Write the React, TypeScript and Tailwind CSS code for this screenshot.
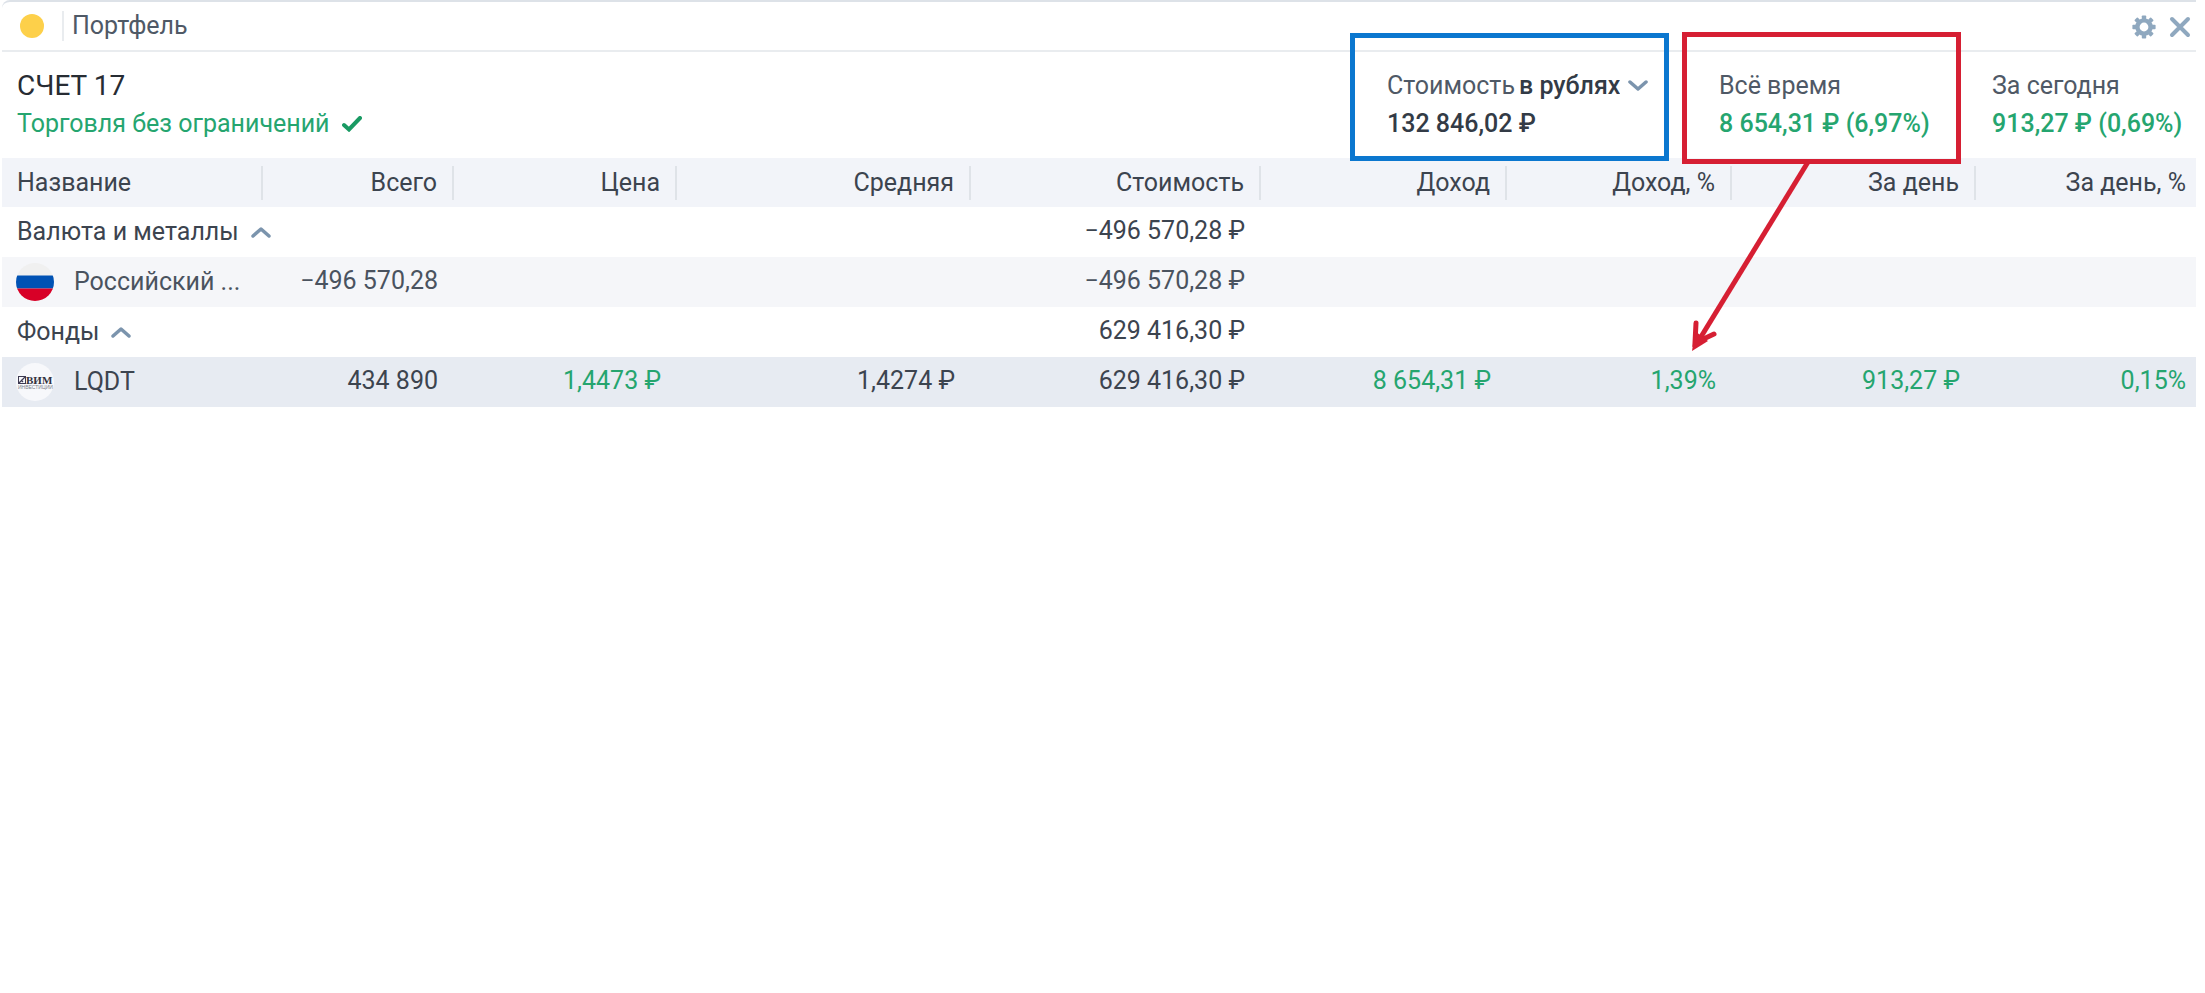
import React, { useState } from "react";

type Row = {
  name: string;
  logo: React.ReactNode;
  total: string;
  price?: string;
  average?: string;
  value: string;
  profit?: string;
  profitPercent?: string;
  day?: string;
  dayPercent?: string;
  rowClass: string;
};

type Group = {
  title: string;
  value: string;
  rows: Row[];
};

const columns = [
  { title: "Название", width: "w-[261px]" },
  { title: "Всего", width: "w-[191px]" },
  { title: "Цена", width: "w-[223px]" },
  { title: "Средняя", width: "w-[294px]" },
  { title: "Стоимость", width: "w-[290px]" },
  { title: "Доход", width: "w-[246px]" },
  { title: "Доход, %", width: "w-[225px]" },
  { title: "За день", width: "w-[244px]" },
  { title: "За день, %", width: "w-[220px]" },
];

function FlagIcon() {
  return (
    <svg viewBox="0 0 38 38" className="size-[38px] shrink-0" aria-hidden="true">
      <clipPath id="flag-circle">
        <circle cx="19" cy="19" r="19" />
      </clipPath>
      <g clipPath="url(#flag-circle)">
        <rect width="38" height="38" fill="#f0f0f0" />
        <rect y="12.5" width="38" height="13" fill="#0052b4" />
        <rect y="25.5" width="38" height="13" fill="#d80027" />
      </g>
    </svg>
  );
}

function FundIcon() {
  return (
    <svg viewBox="0 0 38 38" className="size-[38px] shrink-0" aria-hidden="true">
      <circle cx="19" cy="19" r="19" fill="#f7f8fb" />
      <rect x="2.5" y="13.5" width="7" height="7" fill="none" stroke="#3d3a52" strokeWidth="1" />
      <path d="M2.5 20.5l7-7M5 17l2 2" stroke="#3d3a52" strokeWidth="1.2" fill="none" />
      <text x="10" y="21" fontSize="11" fontWeight="700" fill="#33333d" fontFamily="Liberation Serif, serif">
        ВИМ
      </text>
      <text x="2" y="26" fontSize="5" fill="#7d808a" fontFamily="Liberation Sans, sans-serif">
        ИНВЕСТИЦИИ
      </text>
    </svg>
  );
}

function Chevron({ up }: { up?: boolean }) {
  return (
    <svg viewBox="0 0 20 12" className="h-3 w-5 shrink-0" fill="none" aria-hidden="true">
      <path
        d={up ? "M2 10l8-7 8 7" : "M2 2l8 7 8-7"}
        stroke="#7b94ad"
        strokeWidth="3.5"
        strokeLinecap="round"
        strokeLinejoin="round"
      />
    </svg>
  );
}

function GearIcon() {
  const teeth = [0, 45, 90, 135, 180, 225, 270, 315];
  return (
    <svg viewBox="0 0 24 24" className="size-6" aria-hidden="true">
      <circle cx="12" cy="12" r="6.6" fill="none" stroke="#8fa8bf" strokeWidth="4.4" />
      {teeth.map((angle) => (
        <rect key={angle} x="9.8" y="0.4" width="4.4" height="4" rx="0.8" fill="#8fa8bf" transform={`rotate(${angle} 12 12)`} />
      ))}
    </svg>
  );
}

const groups: Group[] = [
  {
    title: "Валюта и металлы",
    value: "−496 570,28 ₽",
    rows: [
      {
        name: "Российский ...",
        logo: <FlagIcon />,
        total: "−496 570,28",
        value: "−496 570,28 ₽",
        rowClass: "bg-[#f5f6f9] text-[#4a535f]",
      },
    ],
  },
  {
    title: "Фонды",
    value: "629 416,30 ₽",
    rows: [
      {
        name: "LQDT",
        logo: <FundIcon />,
        total: "434 890",
        price: "1,4473 ₽",
        average: "1,4274 ₽",
        value: "629 416,30 ₽",
        profit: "8 654,31 ₽",
        profitPercent: "1,39%",
        day: "913,27 ₽",
        dayPercent: "0,15%",
        rowClass: "bg-[#e7ebf2]",
      },
    ],
  },
];

function GroupRows({ group }: { group: Group }) {
  const [open, setOpen] = useState(true);

  return (
    <tbody>
      <tr className="h-[50px] font-[450]">
        <td colSpan={4} className="pl-[15px]">
          <button type="button" aria-expanded={open} onClick={() => setOpen(!open)} className="flex items-center gap-3">
            {group.title}
            <Chevron up={open} />
          </button>
        </td>
        <td className="pr-4 pb-0.5 text-right">{group.value}</td>
        <td colSpan={4} />
      </tr>
      {open &&
        group.rows.map((row) => (
          <tr key={row.name} className={`h-[50px] ${row.rowClass}`}>
            <td className="pl-[14px]">
              <div className="flex items-center gap-5">
                {row.logo}
                <span>{row.name}</span>
              </div>
            </td>
            <td className="pr-4 pb-0.5 text-right">{row.total}</td>
            <td className="pr-4 pb-0.5 text-right text-[#25a56f]">{row.price}</td>
            <td className="pr-4 pb-0.5 text-right">{row.average}</td>
            <td className="pr-4 pb-0.5 text-right">{row.value}</td>
            <td className="pr-4 pb-0.5 text-right text-[#25a56f]">{row.profit}</td>
            <td className="pr-4 pb-0.5 text-right text-[#25a56f]">{row.profitPercent}</td>
            <td className="pr-4 pb-0.5 text-right text-[#25a56f]">{row.day}</td>
            <td className="pr-[10px] pb-0.5 text-right text-[#25a56f]">{row.dayPercent}</td>
          </tr>
        ))}
    </tbody>
  );
}

export default function App() {
  return (
    <div className="min-h-screen bg-white pr-[9px] pl-[2px] font-[Roboto,sans-serif] text-[25px] leading-[38px] text-[#3c444f]">
      {/* Title bar */}
      <header className="flex h-[52px] items-center rounded-tl-lg border-t-2 border-b-2 border-t-[#dde2e8] border-b-[#e9ecef] pr-1 pl-[18px] text-[#4f5966]">
        <span className="size-6 rounded-full bg-[#fdd04a]" />
        <h1 className="ml-[18px] border-l-2 border-[#e9ecef] pl-2 leading-[30px]">Портфель</h1>
        <div className="ml-auto flex items-center gap-3 pt-0.5">
          <button type="button" aria-label="Настройки">
            <GearIcon />
          </button>
          <button type="button" aria-label="Закрыть">
            <svg viewBox="0 0 24 24" className="size-6" aria-hidden="true">
              <path d="M4 4l16 16M20 4L4 20" stroke="#8fa8bf" strokeWidth="4" strokeLinecap="round" />
            </svg>
          </button>
        </div>
      </header>

      {/* Account summary */}
      <section className="flex h-[106px] justify-between pt-[15px] pl-[15px]">
        <div>
          <h2 className="text-[28px] text-[#272c33]">СЧЕТ 17</h2>
          <p className="flex items-center gap-3 text-[#25a56f]">
            Торговля без ограничений
            <svg viewBox="0 0 20 16" className="h-4 w-5" fill="none" aria-hidden="true">
              <path d="M2 9l5 4.5L18 2" stroke="#199a63" strokeWidth="4" strokeLinecap="round" />
            </svg>
          </p>
        </div>

        <div className="grid grid-cols-[332px_273px_204px]">
          <div className="relative">
            <div className="flex items-center text-[#4f5966]">
              <label htmlFor="currency">Стоимость</label>
              <select
                id="currency"
                className="ml-1 field-sizing-content appearance-none bg-transparent font-medium text-[#333b46]"
              >
                <option>в рублях</option>
                <option>в долларах</option>
              </select>
              <span className="ml-2">
                <Chevron />
              </span>
            </div>
            <p className="font-medium text-[#333b46]">132 846,02 ₽</p>
            <div className="pointer-events-none absolute -top-[34px] -left-[37px] h-[128px] w-[319px] border-5 border-[#0b77cf]" />
          </div>

          <div className="relative">
            <p className="text-[#4f5966]">Всё время</p>
            <p className="font-medium text-[#25a56f]">8 654,31 ₽ (6,97%)</p>
            <div className="pointer-events-none absolute -top-[35px] -left-[37px] h-[132px] w-[279px] border-5 border-[#d61f33]" />
            {/* Arrow down to the yield column */}
            <svg
              viewBox="0 0 130 194"
              className="pointer-events-none absolute top-[94px] -left-[33px] h-[194px] w-[130px]"
              fill="none"
              stroke="#d61f33"
              strokeWidth="5"
              aria-hidden="true"
            >
              <path d="M122 1L10 184" />
              <path d="M10 162L9 182L28 173" strokeLinecap="round" />
              <path d="M6 190L9 170L22 180z" fill="#d61f33" stroke="none" />
            </svg>
          </div>

          <div>
            <p className="text-[#4f5966]">За сегодня</p>
            <p className="font-medium text-[#25a56f]">913,27 ₽ (0,69%)</p>
          </div>
        </div>
      </section>

      {/* Positions */}
      <table className="w-full table-fixed whitespace-nowrap">
        <thead>
          <tr className="h-[49px] bg-[#f2f4f9]">
            {columns.map((column, i) => (
              <th key={column.title} scope="col" className={`p-0 font-normal ${column.width}`}>
                <div
                  className={`leading-[34px] ${i === 0 ? "pl-[15px] text-left" : "text-right"} ${
                    i === columns.length - 1 ? "pr-[10px]" : "border-r-2 border-[#dfe3e8] pr-[15px]"
                  }`}
                >
                  {column.title}
                </div>
              </th>
            ))}
          </tr>
        </thead>
        {groups.map((group) => (
          <GroupRows key={group.title} group={group} />
        ))}
      </table>
    </div>
  );
}
